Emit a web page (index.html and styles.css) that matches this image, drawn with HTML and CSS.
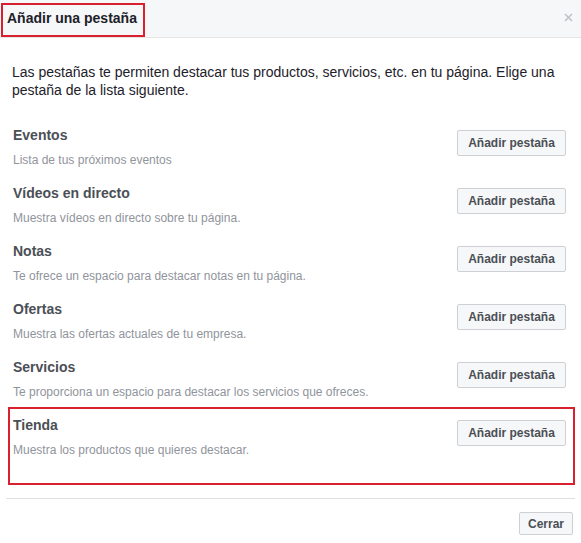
FILE: index.html
```html
<!DOCTYPE html>
<html lang="es">
<head>
  <meta charset="UTF-8">
  <meta name="viewport" content="width=device-width, initial-scale=1.0">
  <title>Añadir una pestaña</title>
  <link rel="stylesheet" href="styles.css">
</head>
<body>
  <div class='dialog'>
    <div class='header'>
      <h1>Añadir una pestaña</h1>
      <span class='close'>
        <svg width="9" height="9" viewBox="0 0 9 9"><path d="M1 1L8 8M8 1L1 8" stroke="#bec3c9" stroke-width="1.6"/></svg>
      </span>
    </div>
    <div class='body'>
      <p class='intro'>Las pestañas te permiten destacar tus productos, servicios, etc. en tu página. Elige una pestaña de la lista siguiente.</p>
      <div class='tabs'>
        <div class='tab'>
          <div class='info'>
            <h2>Eventos</h2>
            <p>Lista de tus próximos eventos</p>
          </div>
          <button class='btn'>Añadir pestaña</button>
        </div>
        <div class='tab'>
          <div class='info'>
            <h2>Vídeos en directo</h2>
            <p>Muestra vídeos en directo sobre tu página.</p>
          </div>
          <button class='btn'>Añadir pestaña</button>
        </div>
        <div class='tab'>
          <div class='info'>
            <h2>Notas</h2>
            <p>Te ofrece un espacio para destacar notas en tu página.</p>
          </div>
          <button class='btn'>Añadir pestaña</button>
        </div>
        <div class='tab'>
          <div class='info'>
            <h2>Ofertas</h2>
            <p>Muestra las ofertas actuales de tu empresa.</p>
          </div>
          <button class='btn'>Añadir pestaña</button>
        </div>
        <div class='tab'>
          <div class='info'>
            <h2>Servicios</h2>
            <p>Te proporciona un espacio para destacar los servicios que ofreces.</p>
          </div>
          <button class='btn'>Añadir pestaña</button>
        </div>
        <div class='tab'>
          <div class='info'>
            <h2>Tienda</h2>
            <p>Muestra los productos que quieres destacar.</p>
          </div>
          <button class='btn'>Añadir pestaña</button>
        </div>
      </div>
    </div>
    <div class='footer'>
      <button class='btn small'>Cerrar</button>
    </div>
    <!-- marcas rojas de la captura -->
    <div class='mark mark-title'></div>
    <div class='mark mark-tienda'></div>
  </div>
</body>
</html>
```

FILE: styles.css
```css
* {
  margin: 0;
  padding: 0;
  box-sizing: border-box;
}
body {
  background-color: #fff;
  font-family: "Liberation Sans", Arial, sans-serif;
  color: #1d2129;
}
.dialog {
  position: relative;
  width: 581px;
  height: 543px;
}
.header {
  height: 38px;
  background-color: #f6f7f9;
  border-bottom: 1px solid #e5e5e5;
  display: flex;
  align-items: center;
  justify-content: space-between;
  padding: 0 8px 0 7px;
}
.header h1 {
  font-size: 14px;
  font-weight: bold;
  line-height: 18px;
  color: #1d2129;
  margin-top: -1px;
}
.close {
  display: flex;
  margin-top: -2px;
}
.body {
  padding: 25px 15px 0 12px;
}
.intro {
  font-size: 14px;
  line-height: 18px;
  color: #1d2129;
}
.tabs {
  margin-top: 27px;
}
.tab {
  height: 58px;
  display: flex;
  justify-content: space-between;
  align-items: flex-start;
}
.info h2 {
  font-size: 14px;
  font-weight: bold;
  line-height: 18px;
  color: #4b4f56;
  padding-left: 1px;
}
.info p {
  margin-top: 8px;
  font-size: 12px;
  line-height: 16px;
  color: #90949c;
  padding-left: 1px;
}
.btn {
  margin-top: 4px;
  height: 26px;
  width: 109px;
  font-family: "Liberation Sans", Arial, sans-serif;
  font-size: 12px;
  font-weight: bold;
  color: #4b4f56;
  background-color: #f6f7f9;
  border: 1px solid #ced0d4;
  border-radius: 2px;
}
.footer {
  margin: 24px 6px 0;
  border-top: 1px solid #dddfe2;
  padding-top: 13px;
  display: flex;
  justify-content: flex-end;
  padding-right: 2px;
}
.btn.small {
  margin-top: 0;
  width: 54px;
  height: 23px;
}
.mark {
  position: absolute;
  border: 2px solid #d8202e;
}
.mark-title {
  left: 1px;
  top: 3px;
  width: 144px;
  height: 34px;
}
.mark-tienda {
  left: 8px;
  top: 407px;
  width: 567px;
  height: 78px;
}
```
